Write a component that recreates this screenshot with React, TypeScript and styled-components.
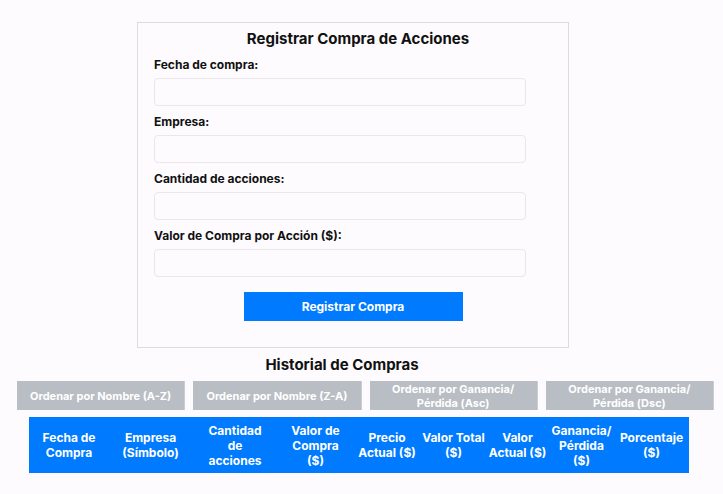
import React from "react";
import styled, { createGlobalStyle } from "styled-components";

const GlobalStyle = createGlobalStyle`
  html, body {
    margin: 0;
    padding: 0;
    background: #fdfbfd;
    font-family: Inter, "Liberation Sans", sans-serif;
    color: #111;
  }
  * {
    box-sizing: border-box;
  }
`;

const Page = styled.div`
  padding-top: 22px;
  width: 723px;
`;

const FormBox = styled.form`
  margin-left: 137px;
  width: 432px;
  border: 1px solid #dcdcdc;
  padding: 6px 16px 26px 16px;
  display: flex;
  flex-direction: column;
`;

const FormTitle = styled.h2`
  margin: 0 0 8px 0;
  font-size: 15px;
  line-height: 20px;
  font-weight: 700;
  text-align: center;
  padding-left: 10px;
`;

const Label = styled.label`
  display: block;
  font-size: 12px;
  line-height: 16px;
  font-weight: 700;
  margin-bottom: 5px;
`;

const Input = styled.input`
  display: block;
  width: 372px;
  height: 28px;
  border: 1px solid #e9e7e9;
  border-radius: 4px;
  background: #fdfbfd;
  margin: 0 0 8px 0;
  padding: 0 8px;
  font-family: inherit;
  font-size: 12px;
`;

const SubmitButton = styled.button`
  align-self: center;
  width: 219px;
  height: 29px;
  margin-top: 7px;
  border: none;
  background: #007bff;
  color: #fff;
  font-family: inherit;
  font-size: 12px;
  font-weight: 700;
  cursor: pointer;
`;

const SectionTitle = styled.h2`
  margin: 7px 0 6px 0;
  width: 684px;
  font-size: 15px;
  line-height: 20px;
  font-weight: 700;
  text-align: center;
`;

const SortRow = styled.div`
  display: flex;
  gap: 8px;
  padding: 0 9px 0 17px;
`;

const SortButton = styled.button`
  flex: 1;
  height: 29px;
  border: none;
  border-right: 1px solid #c9cdd2;
  background: #b9bec4;
  color: #fff;
  font-family: inherit;
  font-size: 11px;
  line-height: 14px;
  font-weight: 700;
  padding: 0 4px;
  white-space: nowrap;
  cursor: pointer;
`;

const SortLabel = styled.span`
  white-space: pre-line;
`;

const Table = styled.table`
  margin: 7px 0 0 29px;
  width: 660px;
  border-collapse: collapse;
  table-layout: fixed;
`;

const HeadRow = styled.tr`
  height: 56px;
  background: #007bff;
`;

const HeadCell = styled.th`
  color: #fff;
  font-size: 12px;
  line-height: 15px;
  font-weight: 700;
  text-align: center;
  vertical-align: middle;
  padding: 4px 0;
  white-space: pre-line;
`;

const fields = [
  "Fecha de compra:",
  "Empresa:",
  "Cantidad de acciones:",
  "Valor de Compra por Acción ($):",
];

const sorts = [
  "Ordenar por Nombre (A-Z)",
  "Ordenar por Nombre (Z-A)",
  "Ordenar por Ganancia/\nPérdida (Asc)",
  "Ordenar por Ganancia/\nPérdida (Dsc)",
];

const columns = [
  { label: "Fecha de\nCompra", width: 80 },
  { label: "Empresa\n(Símbolo)", width: 83 },
  { label: "Cantidad\nde\nacciones", width: 86 },
  { label: "Valor de\nCompra\n($)", width: 75 },
  { label: "Precio\nActual ($)", width: 68 },
  { label: "Valor Total\n($)", width: 65 },
  { label: "Valor\nActual ($)", width: 63 },
  { label: "Ganancia/\nPérdida\n($)", width: 65 },
  { label: "Porcentaje\n($)", width: 75 },
];

const App: React.FC = () => {
  return (
    <>
      <GlobalStyle />
      <Page>
        <FormBox onSubmit={e => e.preventDefault()}>
          <FormTitle>Registrar Compra de Acciones</FormTitle>
          {fields.map(f => (
            <div key={f}>
              <Label>{f}</Label>
              <Input type="text" />
            </div>
          ))}
          <SubmitButton type="submit">Registrar Compra</SubmitButton>
        </FormBox>
        <SectionTitle>Historial de Compras</SectionTitle>
        <SortRow>
          {sorts.map(s => (
            <SortButton key={s}>
              <SortLabel>{s}</SortLabel>
            </SortButton>
          ))}
        </SortRow>
        <Table>
          <colgroup>
            {columns.map(c => (
              <col key={c.label} style={{ width: c.width }} />
            ))}
          </colgroup>
          <thead>
            <HeadRow>
              {columns.map(c => (
                <HeadCell key={c.label}>{c.label}</HeadCell>
              ))}
            </HeadRow>
          </thead>
          <tbody />
        </Table>
      </Page>
    </>
  );
};

export default App;
